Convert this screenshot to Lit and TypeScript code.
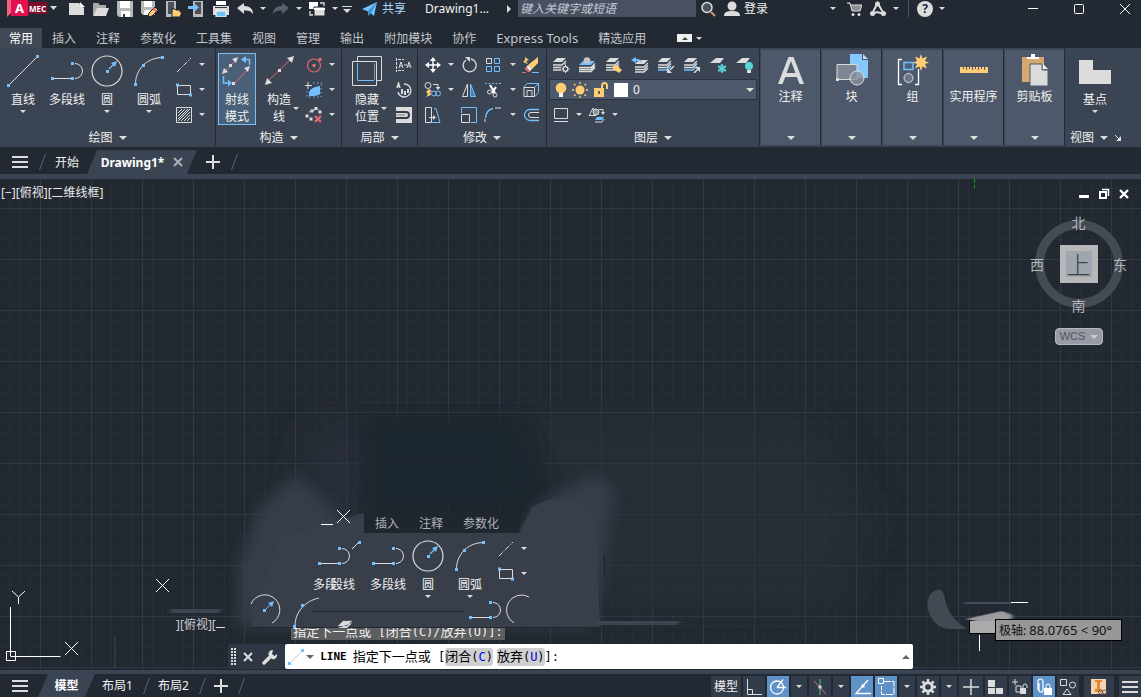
import { LitElement, html, svg, css, nothing } from "lit";
import { customElement, state } from "lit/decorators.js";
import { classMap } from "lit/directives/class-map.js";

const W = "#dcdcdc";
const B = "#74c0fb";
const Y = "#ffce74";
const R = "#e4696b";
const C = "#58d6da";

const dot = (x: number, y: number, c = B) =>
  svg`<rect x=${x - 1.5} y=${y - 1.5} width="3" height="3" fill=${c} stroke="none"/>`;

const layers = (c1 = W, c2 = W, c3 = W) => svg`
  <path d="M5 1h9l-4 4H1z" fill=${c1} stroke="none"/>
  <path d="M1 8h9l4-4" fill="none" stroke=${c2} stroke-width="1.300"/>
  <path d="M1 10.500h9l4-4" fill="none" stroke=${c2} stroke-width="1.300"/>
  <path d="M1 13h9l4-4" fill="none" stroke=${c3} stroke-width="1.500"/>`;

/* name: [width, height, drawing] */
const ICONS: Record<string, [number, number, unknown]> = {
  logo: [50, 17, svg`<path d="M0 0h4v13l-4 4z" fill="#f0647f"/><path d="M4 0h17v16H4z" fill="#e51050"/><path d="M21 2h19v12H21z" fill="#7d0b2c"/>
    <path d="M43 6h7l-3.500 4z" fill=${W}/>`],
  newdoc: [18, 16, svg`<path d="M1 2h10l5 5v7H1z" fill=${W}/><path d="M12 1v5h5z" fill="#f3f3f3"/>`],
  open: [18, 16, svg`<path d="M1 15V2h5l2 2h6v3H6z" fill="#a9a9a9"/><path d="M5 7h12l-3 8H1z" fill=${W}/>`],
  save: [18, 16, svg`<path d="M1 0h16v16H3l-2-2z" fill="#b9b9b9"/><path d="M4 0h10v7H4z" fill="#fff"/><path d="M5 10h9v6H5z" fill="#fff"/><path d="M7 13h2v3H7z" fill="#333b48"/>`],
  saveas: [18, 16, svg`<path d="M1 0h14v14H3l-2-2z" fill="#b9b9b9"/><path d="M4 0h8v6H4z" fill="#fff"/><path d="M4 9h6v5H4z" fill="#fff"/><path d="M8 16l1-4 6-6 3 3-6 6z" fill=${Y} stroke="#222933"/><path d="M13.500 7.500l3 3" stroke=${R} stroke-width="2"/>`],
  openMobile: [18, 16, svg`<path d="M2 0h10v16H2z" fill="#b9b9b9"/><path d="M4 1h6v12H4z" fill="#4a4f58"/><path d="M8 15V8h3l1 1h4v2h2l-2 5H8z" fill=${Y} stroke="#222933"/>`],
  saveMobile: [18, 16, svg`<path d="M5 0h10v16H5z" fill="#b9b9b9"/><path d="M7 1h6v12H7z" fill="#4a4f58"/><path d="M0 5h6V2l5 4.500L6 11V8H0z" fill=${B}/>`],
  print: [18, 16, svg`<path d="M4 0h10v4H4z" fill="#fff"/><path d="M1 5h16v9H1z" fill=${W}/><path d="M3 6.500h12" stroke="#333b48"/><path d="M4 10h10v6H4z" fill=${B} stroke="#fff"/>`],
  undo: [18, 16, svg`<path d="M1 7l7-5v3c6 0 9 3 9 8-2-3-5-4-9-3.500V13z" fill=${W}/>`],
  redo: [18, 16, svg`<path d="M17 7l-7-5v3c-6 0-9 3-9 8 2-3 5-4 9-3.500V13z" fill="#59606c"/>`],
  windows: [18, 16, svg`<path d="M1 1h9v7H1z" fill="#fff"/><path d="M6 6h11v9H6z" fill=${W} stroke="#222933"/><path d="M6 8h11" stroke="#fff" stroke-width="2"/><path d="M12 2h4v3M2 10v4h3" fill="none" stroke=${W} stroke-width="1.300"/>`],
  custom: [12, 16, svg`<path d="M1 5.500h10" stroke=${W}/><path d="M2 8h8l-4 4z" fill=${W}/>`],
  plane: [18, 16, svg`<path d="M1 8L16 1 13 15 8 11z" fill=${B}/><path d="M16 1L7 10v5l3-3" fill="#3b93d8"/>`],
  magnify: [16, 16, svg`<circle cx="7" cy="6.500" r="5" fill="#4a5260" stroke=${W} stroke-width="1.500"/><path d="M11 11l4 4" stroke="#c99a63" stroke-width="2"/>`],
  user: [18, 16, svg`<circle cx="9" cy="5" r="4.500" fill=${W}/><path d="M1 15c0-4 3-5 8-5s8 1 8 5z" fill=${W}/>`],
  cart: [16, 16, svg`<path d="M1 2h3l2 8h8l2-6H5" fill="#8e8e8e" stroke=${W}/><circle cx="7" cy="13.500" r="1.500" fill=${W}/><circle cx="13" cy="13.500" r="1.500" fill=${W}/>`],
  autodesk: [18, 16, svg`<path d="M3 13L8.500 2 15 13M3 13l5-2 7 2" fill="none" stroke=${W} stroke-width="2"/><circle cx="8.500" cy="3" r="2.500" fill=${W}/><circle cx="3.500" cy="12.500" r="2.500" fill=${W}/><circle cx="14.500" cy="12.500" r="2.500" fill=${W}/>`],
  winmin: [12, 12, svg`<path d="M1 5.500h10" stroke="#fff"/>`],
  winmax: [12, 12, svg`<rect x="1.500" y="1.500" width="9" height="9" rx="1" fill="none" stroke="#fff"/>`],
  winclose: [12, 12, svg`<path d="M1 1l10 10M11 1L1 11" stroke="#fff"/>`],
  menu: [16, 14, svg`<path d="M0 2h16M0 7h16M0 12h16" stroke=${W} stroke-width="2"/>`],
  plus: [14, 14, svg`<path d="M0 7h14M7 0v14" stroke=${W} stroke-width="2"/>`],
  cross: [10, 10, svg`<path d="M1 1l8 8M9 1L1 9" stroke="#aab0ba" stroke-width="2"/>`],

  line: [32, 32, svg`<path d="M2 30L30 2" stroke=${W}/>${dot(1.5, 30.5)}${dot(30.5, 1.5)}`],
  polyline: [32, 32, svg`<path d="M3 23.500h17M24 8.500a7.500 7.500 0 0 1 0 15" fill="none" stroke=${W}/>${dot(1.5, 23.5)}${dot(21.5, 8.5)}${dot(21.5, 23.5)}`],
  circle: [32, 32, svg`<circle cx="16" cy="16" r="15" fill="none" stroke=${W} stroke-width="1.200"/><path d="M18 14l5-5" stroke=${B} stroke-width="1.300"/><path d="M26 6l-6 2 4 4z" fill=${B}/>${dot(16.5, 16.5)}`],
  arc: [32, 32, svg`<path d="M2.500 29C2.500 15 13 3 29 2.500" fill="none" stroke=${W}/>${dot(2.5, 29.5)}${dot(10.5, 10.5)}${dot(29.5, 2.5)}`],
  ray: [32, 32, svg`<path d="M3 18L15 5M14 28L27 14" stroke=${R}/><path d="M17 2l-2 6-4-4zM1 19l2-6 4 4zM29 11l-2 6-4-4z" fill=${W}/>
    <path d="M28.500 10V4.500H23M2.500 21v7H8" fill="none" stroke=${B} stroke-width="1.500"/><path d="M25 1v7l-5-3.500zM7 24.500v7l4-3.500z" fill=${B}/>${dot(9.5, 10.5, W)}${dot(12.5, 28.5, W)}`],
  xline: [32, 32, svg`<path d="M5 26L27 5" stroke=${R}/><path d="M31 1l-2 7-5-5zM2 30l2-7 5 5z" fill=${W}/>${dot(16.5, 15.5, W)}`],
  hideshow: [32, 32, svg`<path d="M6.500 1.500h24v24h-24z" fill="none" stroke=${W}/><path d="M1.500 6.500h24v24h-24z" fill="#3b4453" stroke=${W}/><path d="M6.500 8v17.500H23" fill="none" stroke=${B}/><path d="M23.500 8v17" stroke="#8b929e"/>`],
  dashline: [16, 16, svg`<path d="M1 15L15 1" stroke=${W} stroke-dasharray="5 1.500 1 1.500"/>`],
  rect: [16, 16, svg`<path d="M1.500 3.500h13v9h-13z" fill="none" stroke=${W}/>${dot(1.5, 3)}${dot(14.5, 13)}`],
  hatch: [16, 16, svg`<path d="M.500.500h15v15H.500z" fill="none" stroke=${W}/><path d="M2 6l4-4M2 9l7-7M2 12l10-10M2 14L14 2M5 14l9-9M8 14l6-6M11 14l3-3" stroke=${W}/>`],
  redcircle: [16, 16, svg`<circle cx="8" cy="8.500" r="6.500" fill="none" stroke=${R} stroke-width="1.200"/>${dot(8, 8.5, R)}${dot(14, 2.5, R)}`],
  bluepick: [18, 16, svg`<path d="M4 14c-1-6 3-9 11-10v8c-2 2-7 2-11 2z" fill=${B}/><path d="M3 0v7M0 3.500h7" stroke=${W}/><path d="M8 1h9M16 2v13M2 9v6h14" fill="none" stroke=${B} stroke-dasharray="1.500 2.500"/>`],
  delcons: [18, 16, svg`<path d="M2 10C3 4 7 2 14 3" fill="none" stroke=${W} stroke-dasharray="2 3"/>${dot(2, 9, W)}${dot(7, 4, W)}${dot(11, 1.500, W)}${dot(15, 5, W)}${dot(6, 12, W)}<path d="M10 9l6 6M16 9l-6 6" stroke=${R} stroke-width="2.200"/>`],
  autodim: [18, 16, svg`<path d="M1.500 1v14M3 2.500h6M3 13.500h6" fill="none" stroke=${W} stroke-dasharray="3 1"/><path d="M4 11l2-6 2 6M5 9h2M12 11l2-6 2 6M13 9h2M9 8h3" fill="none" stroke=${W}/>`],
  rotview: [18, 16, svg`<path d="M9 2a6.500 6.500 0 1 1-6 8M2 6l1.500-5L5 6M2.500 4.500h2" fill="none" stroke=${W} stroke-width="1.400"/><path d="M6 7h2v5H6zM9 9h2v4H9zM12 7h2v4h-2z" fill=${W}/>`],
  offsetblk: [18, 16, svg`<path d="M1 0h16v16H1z" fill=${W}/><path d="M1 5h10q3 0 3 3t-3 3H1" fill="none" stroke="#333b48" stroke-width="2"/><path d="M1 8h9" stroke="#777"/>`],
  move: [16, 16, svg`<path d="M8 2v12M2 8h12" stroke="#fff" stroke-width="1.400"/><path d="M8 0l3 4H5zM8 16l3-4H5zM0 8l4-3v6zM16 8l-4-3v6z" fill="#fff"/>`],
  rotate: [16, 16, svg`<path d="M10 2a6.500 6.500 0 1 1-5 1" fill="none" stroke=${W} stroke-width="1.300"/><path d="M4 0h5v5z" fill=${W}/>`],
  array: [16, 16, svg`<path d="M1.500 1.500h5v5h-5z" fill="none" stroke=${W}/><path d="M9.500 1.500h5v5h-5zM1.500 9.500h5v5h-5zM9.500 9.500h5v5h-5z" fill="none" stroke=${B}/>`],
  eraser: [18, 16, svg`<path d="M3 0l4 3-3 1 2 3-5-2 2-2z" fill=${Y}/><path d="M16 0v6l-6 6-4-4z" fill=${Y}/><path d="M6 8l4 4-3 3-4-3z" fill="#f3f3f3"/><path d="M5 10l3 4-2 1-3-3z" fill=${R}/><path d="M0 15.500h4" stroke=${R}/><path d="M10 15.500h7" stroke=${B}/>`],
  copy: [18, 16, svg`<circle cx="4" cy="3.500" r="3" fill="none" stroke=${W}/><path d="M9 2.500h5V6" fill="none" stroke=${W}/><path d="M11.500 5h5L14 8z" fill=${W}/><path d="M5 7l3 2-2 1 1 3-5 2 2-3-2-2z" fill=${Y}/><circle cx="10" cy="11.500" r="2.500" fill="none" stroke=${B}/><circle cx="14" cy="11.500" r="2.500" fill="none" stroke=${B}/>`],
  mirror: [16, 16, svg`<path d="M6.500 2v12.500h-5z" fill="none" stroke=${W}/><path d="M9.500 2v12.500h5z" fill="#3d7fb4" stroke=${B}/>`],
  trim: [18, 16, svg`<path d="M1 1.500h16" stroke=${B} stroke-dasharray="2 1.500"/><path d="M6 3l5 8M12 5l-4 6" stroke="#fff" stroke-width="2.200"/><circle cx="5.500" cy="10" r="2" fill="none" stroke=${W}/><circle cx="11" cy="13" r="2" fill="none" stroke=${W}/>`],
  box3d: [18, 16, svg`<path d="M1.500 5.500L5 1.500h11.500v9L13 14.500M12.500 5.500l4-4" fill="none" stroke=${B}/><path d="M2 5.500h10.500v9H2zM5 8.500h5v6H5z" fill="none" stroke=${W}/>`],
  stretch: [18, 16, svg`<path d="M1.500.500h6v15h-6z" fill="none" stroke=${W}/><path d="M10 1.500h2l4 14H7" fill="none" stroke=${B}/><path d="M5 10.500h5" stroke=${W}/><path d="M9 8l3 2.500L9 13z" fill=${W}/>`],
  scale: [16, 16, svg`<path d="M.500 6V.500h15v15H10" fill="none" stroke=${B}/><path d="M.500 7.500h8v8h-8z" fill="none" stroke=${W}/>`],
  fillet: [18, 16, svg`<path d="M1 15V12" stroke=${W}/><path d="M1.500 11Q2 3 9 1.500" fill="none" stroke=${B} stroke-width="1.400"/><path d="M11 1h6" stroke=${W}/>`],
  offset: [18, 16, svg`<path d="M17 2.500H8a5.500 5.500 0 0 0 0 11h9" fill="none" stroke=${B} stroke-width="1.300"/><path d="M17 5.500H9a2.500 2.500 0 0 0 0 5h8" fill="none" stroke=${W}/>`],
  layProp: [18, 16, svg`${layers()}<circle cx="13.500" cy="12" r="4.500" fill="#3b4453"/><circle cx="13.500" cy="12" r="2.300" fill="none" stroke=${W} stroke-width="1.300"/><path d="M13.500 8v1.500M13.500 14.500V16M9.500 12H11M16 12h1.500M11 9.500l1 1M16 9.500l-1 1M11 14.500l1-1M16 14.500l-1-1" stroke=${W}/>`],
  layOff: [18, 16, svg`<path d="M5 4h12l-4 4H1z" fill=${B}/><path d="M1 10.500h12l4-4M1 12.500h12l4-4M1 14.500h12l4-4" fill="none" stroke=${W} stroke-width="1.300"/><circle cx="9" cy="3.500" r="3.300" fill="#c2c2c2"/>`],
  layIso: [18, 16, svg`${layers()}<path d="M8 9l3-1 6 5-3 3-6-4z" fill=${Y}/>`],
  layPrev: [18, 16, svg`<g transform="translate(3 2)">${layers()}</g><path d="M0 3l5-3v2c4 0 6 1 6 4-2-2-4-2-6-2v2z" fill=${B}/>`],
  layMake: [18, 16, svg`${layers(W, W, B)}<path d="M17 9l-4 4" stroke=${W} stroke-width="1.500"/><path d="M10 11v5h5z" fill=${W}/>`],
  layMatch: [18, 16, svg`${layers(W, W, B)}<path d="M11 16l4-4" stroke=${W} stroke-width="1.500"/><path d="M12 10h5v5z" fill=${W}/>`],
  layFreeze: [18, 16, svg`<path d="M6 1h8l-4 5H0z" fill=${W}/><path d="M12 7v9M8 9l8 5M16 9l-8 5" stroke=${C} stroke-width="1.500"/><circle cx="12" cy="11.500" r="3" fill="none" stroke=${C}/>`],
  layBulb: [18, 16, svg`<path d="M6 1h8l-4 5H0z" fill=${W}/><circle cx="13" cy="9" r="4" fill=${C}/><path d="M11 13h4v3h-4z" fill=${W}/>`],
  bulb: [12, 16, svg`<circle cx="6" cy="6" r="5.300" fill=${Y}/><path d="M4 11h4v4H4z" fill="#f3f3f3"/>`],
  sun: [16, 16, svg`<circle cx="8" cy="8" r="4.500" fill=${Y}/><path d="M8 0v2M8 14v2M0 8h2M14 8h2M2 2l1.500 1.500M12.500 12.500L14 14M14 2l-1.500 1.500M3.500 12.500L2 14" stroke=${Y} stroke-width="1.300"/>`],
  lock: [16, 16, svg`<path d="M1 6h10v9H1z" fill=${Y}/><path d="M9 7V4q0-3 2.500-3T14 4v3" fill="none" stroke=${Y} stroke-width="2"/><path d="M6 9v3" stroke="#333b48" stroke-width="1.500"/>`],
  swatch: [14, 14, svg`<path d="M0 0h14v14H0z" fill="#fff"/>`],
  layState: [16, 16, svg`<path d="M1.500 1.500h13v10h-13zM1 14.500h14" fill="none" stroke=${W}/>`],
  layConv: [18, 16, svg`<path d="M1 9l4-8 3 5" fill="none" stroke=${W}/><circle cx="8" cy="5" r="3" fill="#8b929e" stroke=${W}/><path d="M1 8.500h7" stroke=${W}/><path d="M11 2.500h4V5" fill="none" stroke=${W}/><path d="M13 5h4l-2 3z" fill=${W}/><path d="M9 10h7l-2 3H7z" fill=${B}/><path d="M7 15h7l2-3" fill="none" stroke=${W}/>`],

  letterA: [32, 32, svg`<path d="M3 30L13.500 3h5L29 30h-4.500l-2.700-7H10.200L7.500 30zM11.500 19h9L16 7z" fill=${W}/>`],
  block: [32, 32, svg`<path d="M14 0h12v6h6v18H14z" fill="#85c8fb"/><path d="M27 0l5 5h-5z" fill="#b7dffc"/><path d="M1 10.500h20v15H1z" fill="#7d8694" stroke=${W}/><circle cx="21" cy="24" r="7" fill="#8a929e" fill-opacity=".8" stroke=${W}/>${dot(1.5, 25.5, W)}`],
  group: [32, 32, svg`<path d="M5 5.500H1.500v25H5M18 30.500h3.500V15" fill="none" stroke="#fff" stroke-width="1.300"/><path d="M7 8.500h9v7H7z" fill="#4a6480" stroke=${B} stroke-width="1.500"/><circle cx="11.500" cy="24" r="4.500" fill="#6b7685" stroke=${W}/><path d="M24 0l1.500 4.500L30 2.500l-2 4.500 4 1.500-4 1.500 2 4.500-4.500-2L24 17l-1.500-4.500-4.500 2 2-4.500-4-1.500 4-1.500-2-4.500 4.500 2z" fill=${Y}/>`],
  ruler: [32, 32, svg`<path d="M2 13h28v6H2z" fill=${Y}/><path d="M5.500 13v2M8.500 13v3M11.500 13v2M14.500 13v3M17.500 13v2M20.500 13v3M23.500 13v2M26.500 13v3" stroke="#4d596b"/>`],
  clipboard: [32, 32, svg`<path d="M3 3h22v25H3z" fill="#d6a871"/><path d="M8 5V3h4V0h4v3h4v2z" fill="#fff"/><path d="M11 10h12v6h6v16H11z" fill="#dcdcdc" stroke="#4d596b"/><path d="M24 10l5 5h-5z" fill="#f3f3f3"/>`],
  base: [32, 32, svg`<path d="M0 5h14v10h18v14H0z" fill=${W}/>`],

  grip: [6, 18, svg`<path d="M1 0v18M4 0v18" stroke=${W} stroke-width="2" stroke-dasharray="2 1"/>`],
  cmdclose: [10, 10, svg`<path d="M1 1l8 8M9 1L1 9" stroke=${W} stroke-width="2"/>`],
  wrench: [16, 16, svg`<path d="M2 14L9 7" stroke=${W} stroke-width="3.500" stroke-linecap="round"/><path d="M11 1a4 4 0 0 0-4 6l3 3a4 4 0 0 0 5-5l-2.500 2-2.500-2z" fill=${W}/>`],
  cmdline: [16, 16, svg`<path d="M2 14L14 2" stroke="#c9c9c9"/>${dot(1.5, 14.5)}${dot(14.5, 1.5)}`],

  ortho: [16, 16, svg`<path d="M1.500 0v15.500H16M1.500 10.500h5v5" fill="none" stroke=${W}/>`],
  polar: [18, 18, svg`<circle cx="8" cy="9.500" r="6.500" fill="none" stroke="#fff" stroke-width="1.300"/><path d="M8 9.500h9M8 9.500l6-8" stroke="#fff" stroke-width="1.300"/>`],
  iso: [16, 16, svg`<path d="M2 2l12 13" stroke=${R}/><path d="M8 0v16" stroke="#4fbf78"/>${dot(8, 8, W)}`],
  track: [18, 18, svg`<path d="M15 2L3 15.500h15" fill="none" stroke="#fff" stroke-width="1.300"/>${dot(10, 8, "#fff")}`],
  snap: [18, 18, svg`<path d="M7 3.500h10v13H4.500V8" fill="none" stroke="#fff" stroke-dasharray="7 1"/><path d="M1.500.500h5v5h-5z" fill="#5f92c6" stroke="#fff"/>`],
  gear: [16, 16, svg`<circle cx="8" cy="8" r="4.300" fill="none" stroke=${W} stroke-width="3"/><path d="M8 0v3M8 13v3M0 8h3M13 8h3M2.300 2.300l2 2M11.700 11.700l2 2M13.700 2.300l-2 2M4.300 11.700l-2 2" stroke=${W} stroke-width="2.500"/>`],
  bigplus: [16, 16, svg`<path d="M0 8h16M8 0v16" stroke=${W} stroke-width="1.500"/>`],
  tiles: [16, 16, svg`<path d="M0 1h7v7H0zM0 9h7v6H0zM8 9h7v6H8z" fill=${W}/>`],
  units: [16, 16, svg`<path d="M0 3h6M3 0v6" stroke=${W}/><path d="M4 7h5v6H4z" fill="none" stroke=${W}/><path d="M8 9h6v6H8z" fill=${W}/><path d="M11 9V7q0-2 2-2t2 2v2" fill="none" stroke=${W}/>`],
  attach: [18, 18, svg`<path d="M3 12V4q0-3 2.500-3T8 4v8q0 2-2 2t-2-2V5" fill="none" stroke="#fff" stroke-width="1.200"/><path d="M9 10h8v7H9z" fill="#fff"/><path d="M11 10V8q0-2 2-2t2 2v2" fill="none" stroke="#fff"/>`],
  shapes: [16, 16, svg`<path d="M.500.500h6v6h-6z" fill="none" stroke=${W}/><circle cx="12.500" cy="6" r="3" fill="none" stroke=${W}/><path d="M7 10l4 5.500H3z" fill="none" stroke=${W}/>`],
  graphics: [16, 16, svg`<path d="M0 0h15v15H0z" fill="#f6d3ae"/><path d="M4 1h7v2H9v7h2v3H4v-3h2V3H4z" fill="#e48a35"/><circle cx="9.500" cy="13" r="2" fill="none" stroke="#70604c"/><circle cx="13.500" cy="13" r="2" fill="none" stroke="#70604c"/>`],
  vmin: [12, 12, svg`<path d="M1 7h10v3H1z" fill="#fff"/>`],
  vrestore: [12, 12, svg`<path d="M4 1.500h6.500V8" fill="none" stroke="#fff" stroke-width="1.500"/><path d="M2 4h6v6H2z" fill="none" stroke="#fff" stroke-width="2"/>`],
  vclose: [12, 12, svg`<path d="M2 2l8 8M10 2l-8 8" stroke="#fff" stroke-width="2.400"/>`],
  launcher: [8, 8, svg`<path d="M1 1l5 5" stroke=${W}/><path d="M7 2v5H2z" fill=${W}/>`],
};

const icon = (name: string) => {
  const [w, h, body] = ICONS[name];
  return html`<svg class="icon" width=${w} height=${h} viewBox="0 0 ${w} ${h}" aria-hidden="true">${body}</svg>`;
};

const caret = (size = "sm") => html`<i class="caret ${size}"></i>`;

const tool = (name: string, label: string) =>
  html`<button class="tool" aria-label=${label}>${icon(name)}</button>`;
const drop = (label: string) =>
  html`<button class="drop" aria-label="${label}选项">${caret()}</button>`;

@customElement("app-root")
export class AppRoot extends LitElement {
  @state() private ribbonTab = "常用";
  @state() private layout = "模型";

  static styles = css`
    :host {
      display: flex;
      flex-direction: column;
      min-height: 100vh;
      overflow: hidden;
      background: #222933;
      color: #f0f0f0;
      font: 12px/17px "Noto Sans", "Noto Sans CJK SC", sans-serif;
    }
    *, *::before { box-sizing: border-box; }
    button, select, input { margin: 0; padding: 0; border: 0; background: none; color: inherit; font: inherit; }
    button { display: flex; align-items: center; justify-content: center; white-space: nowrap; }
    .icon { display: block; flex: none; }
    .caret { flex: none; border: 3px solid transparent; border-top-color: #dcdcdc; border-bottom: 0; }
    .caret.lg { border-width: 4px 4px 0; }
    .row { display: flex; align-items: center; }

    .titlebar { display: flex; align-items: center; height: 17px; margin-bottom: 11px; padding-left: 7px; }
    .brand { position: relative; justify-content: flex-start; width: 58px; height: 17px; }
    .brand span, .brand small { position: absolute; top: 0; left: 4px; width: 17px; color: #fff; font-weight: 700; font-size: 13px; text-align: center; }
    .brand small { left: 21px; width: 19px; font-size: 8px; }
    .titlebar .tool { width: 24px; height: 16px; }
    .titlebar .drop { width: 12px; }
    .share { gap: 3px; margin-left: 8px; color: #a9d7fb; }
    .doc { margin-left: 19px; }
    .fwd { margin: 0 7px 0 18px; border: 4px solid transparent; border-left-color: #dcdcdc; border-right: 0; }
    .search { width: 178px; height: 17px; padding: 0 2px; background: #485062; font-style: italic; }
    .search::placeholder { color: #c9ccd2; opacity: 1; }
    .login { gap: 3px; margin: 0 59px 0 3px; }
    .rule { width: 1px; height: 17px; margin: 0 8px 0 6px; background: #4c5462; }
    .help { width: 16px; height: 16px; margin-right: 3px; border-radius: 50%; background: #dcdcdc; color: #222933; font-weight: 700; }
    .market { margin-left: 3px; }
    .wincontrols { gap: 34px; margin-left: auto; padding-right: 10px; }

    .ribbontabs { height: 20px; }
    .ribbontabs button { height: 20px; padding: 0 10px; color: #c3c6cb; }
    .ribbontabs button.active { padding: 0 9px; background: #404855; color: #fff; }
    .ribbontabs button.latin { font-size: 13px; }
    .ribbontabs .collapse { padding: 0; margin: 0 4px 0 21px; width: 15px; height: 8px; background: #f0f0f0; }
    .collapse i { border: 3px solid transparent; border-bottom-color: #444; border-top: 0; }

    .ribbon { display: flex; min-height: 99px; padding: 1px 0; background: #3b4453; }
    .panel { display: flex; flex: none; flex-direction: column; justify-content: space-between; border-right: 1px solid #232a35; }
    .panel.draw { width: 216px; }
    .panel.cons { width: 126px; }
    .panel.local { width: 76px; }
    .panel.edit { width: 129px; }
    .panel.layer { width: 213px; }
    .panel.view { flex: 1; border: 0; }
    .body { display: flex; align-items: flex-start; }
    .panel footer { display: flex; align-items: center; justify-content: center; gap: 6px; height: 17px; }
    .big { flex-direction: column; justify-content: flex-start; margin-top: 4px; padding-top: 1px; border: 1px solid transparent; }
    .big .icon { margin-bottom: 4px; }
    .big > .caret { margin-top: 2px; }
    .big.on { height: 72px; border-color: #74c0fb; background: #4a6078; }
    .side { display: flex; align-items: center; padding-left: 8px; }
    .side .caret { margin-left: 2px; }
    .w38 { width: 38px; }
    .w42 { width: 42px; }
    .w46 { width: 46px; }
    .w50 { width: 50px; }
    .stack { display: grid; grid-auto-rows: 25px; align-items: center; padding-top: 3px; }
    .ribbon .tool { width: 24px; height: 24px; }
    .ribbon .drop { width: 12px; height: 24px; }
    .pair { grid-template-columns: 24px 12px; }
    .modify { grid-template-columns: 24px 12px 24px 26px 12px 28px; padding-left: 3px; }
    .construct { padding-left: 2px; gap: 2px; }
    .layerrows { display: grid; grid-auto-rows: 25px; align-items: center; padding: 3px 2px 0; }
    .layerrows .row { justify-content: space-between; }
    .layerrows .row.start { justify-content: flex-start; }
    .combo { display: flex; align-items: center; gap: 5px; height: 21px; padding: 0 2px 0 5px; border: 1px solid #2a3240; background: #4d596b; }
    .combo select { flex: 1; appearance: none; }
    .closedwrap { display: flex; flex: none; padding: 1px 0 1px 1px; border-right: 1px solid #232a35; }
    .closed { flex-direction: column; width: 59px; padding: 4px 0 5px; background: #4d596b; }
    .closed span { margin-top: 2px; }
    .closed .caret { margin-top: auto; }
    .view footer { justify-content: flex-start; padding-left: 5px; }
    .view .big { width: 60px; }

    .slash { flex: none; width: 1px; height: 16px; background: #5a6270; transform: skewX(-20deg); }
    .filetabs { display: flex; align-items: center; height: 27px; padding: 3px 0 0 12px; }
    .filetabs > button { height: 24px; }
    .filetabs .slash { margin: 0 12px 0 14px; }
    .sheet { clip-path: polygon(10px 0, 100% 0, calc(100% - 10px) 100%, 0 100%); background: #3b4453; }
    .doctab { gap: 9px; width: 110px; margin-left: 8px; font-weight: 700; color: #fff; }
    .addtab { margin-left: 9px; }
    .strip { height: 5px; flex: none; background: #3b4453; }

    .canvas { position: relative; flex: 1; min-height: 300px; overflow: hidden; background: #22282f; }
    .scene { position: absolute; inset: 0; width: 100%; height: 100%; }
    .viewlabel { position: absolute; top: 5px; left: 1px; color: #e8e8e8; }
    .viewctl { position: absolute; top: 9px; right: 11px; display: flex; gap: 8px; }
    .ghostlabel { position: absolute; top: 437px; left: 176px; color: #c9ccd2; }
    .ghost { position: absolute; top: 334px; left: 304px; width: 232px; }
    .ghosttabs { display: flex; gap: 20px; margin-left: 60px; padding-left: 11px; width: 159px; height: 20px; align-items: center; color: #aeb2b8; background: #20262e; clip-path: polygon(0 0, 100% 0, calc(100% - 4px) 100%, 0 100%); }
    .ghosttools { display: flex; align-items: flex-start; }
    .ghosttools .big { margin-top: 5px; }
    .ghosttools .first { width: 60px; margin-right: 3px; }
    .ghosttools .overlap { margin-left: -6px; }
    .ghosttools .stack { grid-template-columns: 22px 14px; justify-items: center; padding-left: 2px; }

    .cube { position: absolute; top: 33px; right: 14px; display: grid; grid-template: 21px 62px 21px / 14px 69px 14px; place-items: center; color: #b4b7bb; font: 14px/17px "Noto Sans CJK SC", sans-serif; }
    .cube::before { content: ""; position: absolute; top: 8px; left: 5px; width: 88px; height: 88px; border: 9px solid #4b5159; border-radius: 50%; opacity: .85; }
    .cube > * { position: relative; grid-row: 2; }
    .cube .n { grid-area: 1 / 2; }
    .cube .s { grid-area: 3 / 2; }
    .cube .face { grid-column: 2; width: 38px; height: 38px; border: 6px solid #b5b7b9; background: #9fa7ae; color: #3a4047; font: 300 24px/26px "Noto Sans CJK SC", sans-serif; }
    .wcs { position: absolute; top: 149px; right: 38px; gap: 5px; width: 48px; height: 17px; border: 1px solid #b5b9c0; border-radius: 4px; background: #979ba5; color: #50565f; font: 11px/15px "Liberation Sans", sans-serif; }
    .wcs .caret { border-top-color: #c6cad1; }
    .tip { position: absolute; top: 440px; left: 995px; height: 22px; padding: 0 9px 0 3px; border: 1px solid #000; background: #979797; color: #111; line-height: 20px; white-space: nowrap; }
    .tip span { font-size: 13px; }

    .command { position: absolute; bottom: 1px; left: 20%; width: 60%; font: 12px/16px "DejaVu Sans Mono", "Noto Sans CJK SC", monospace; }
    .prompt { display: flex; align-items: flex-end; width: max-content; height: 12px; margin: 0 0 4px 63px; padding: 0 2px; overflow: hidden; background: #5c5e60; color: #f2f2f2; white-space: pre; }
    .cjk { font-size: 13px; }
    .cmdbar { display: flex; align-items: center; height: 25px; background: #2f3644; }
    .cmdbar > button { width: 22px; height: 25px; }
    .handle { margin: 0 0 0 3px; }
    .cmdfield { display: flex; flex: 1; align-items: center; height: 25px; margin-left: 4px; padding: 0 3px; border-radius: 2px; background: #fff; color: #000; white-space: pre; }
    .cmdfield .caret { margin: 0 6px 0 2px; border-top-color: #666; }
    .cmdfield b { font-size: 11px; margin-right: 6px; }
    .cmdfield .opt { display: flex; align-items: center; height: 18px; border-radius: 3px; background: #d0d0d0; }
    .opts { display: flex; gap: 4px; }
    .cmdfield em { color: #0000e6; font-style: normal; }
    .cmdfield input { flex: 1; min-width: 0; outline: 0; }
    .up { border: 4px solid transparent; border-bottom-color: #666; border-top: 0; }

    .status { display: flex; align-items: stretch; height: 23px; padding-left: 12px; }
    .strip.low { height: 4px; }
    .sheettab { width: 57px; margin-left: 10px; color: #fff; font-weight: 700; }
    .status .lay { padding: 0 7px; }
    .status .slash { align-self: center; margin: 0 4px 0 6px; }
    .sts { display: flex; gap: 2px; margin-left: auto; padding-top: 2px; }
    .sts button { width: 22px; background: #333c4a; }
    .sts .drop { width: 16px; }
    .sts .mid { width: 24px; }
    .sts .wide { width: 30px; }
    .sts .on { background: #5f92c6; }
    .sts .far { margin-left: 3px; }
  `;

  private big(name: string, label: string, width: string, arrow = true) {
    return html`<button class="big ${width}">${icon(name)}<span>${label}</span>${arrow ? caret() : nothing}</button>`;
  }

  private foot(label: string) {
    return html`<footer><span>${label}</span>${caret("lg")}</footer>`;
  }

  private titlebar() {
    return html`<header class="titlebar">
      <button class="brand" aria-label="应用程序菜单">${icon("logo")}<span>A</span><small>MEC</small></button>
      ${["newdoc:新建", "open:打开", "save:保存", "saveas:另存为", "openMobile:从移动设备打开", "saveMobile:保存到移动设备", "print:打印", "undo:放弃"].map((s) => tool(s.split(":")[0], s.split(":")[1]))}
      ${drop("放弃")}${tool("redo", "重做")}${drop("重做")}${tool("windows", "切换窗口")}${drop("窗口")}
      <button aria-label="自定义">${icon("custom")}</button>
      <button class="share">${icon("plane")}共享</button>
      <span class="doc">Drawing1...</span><i class="fwd"></i>
      <input class="search" aria-label="搜索" placeholder="键入关键字或短语" />
      ${tool("magnify", "查找")}
      <button class="login">${icon("user")}登录</button>
      ${drop("登录")}
      <div class="row market">${tool("cart", "商店")}${tool("autodesk", "Autodesk")}${drop("Autodesk")}</div>
      <i class="rule"></i><button class="help" aria-label="帮助">?</button>${drop("帮助")}
      <div class="row wincontrols">
        <button aria-label="最小化">${icon("winmin")}</button>
        <button aria-label="最大化">${icon("winmax")}</button>
        <button aria-label="关闭">${icon("winclose")}</button>
      </div>
    </header>`;
  }

  private tabs() {
    const names = ["常用", "插入", "注释", "参数化", "工具集", "视图", "管理", "输出", "附加模块", "协作", "Express Tools", "精选应用"];
    return html`<nav class="row ribbontabs">
      ${names.map((n) => html`<button class=${classMap({ active: n === this.ribbonTab, latin: /^[A-Z]/.test(n) })} @click=${() => (this.ribbonTab = n)}>${n}</button>`)}
      <button class="collapse" aria-label="折叠功能区"><i></i></button>${caret()}
    </nav>`;
  }

  private ribbon() {
    const closed = [["letterA", "注释"], ["block", "块"], ["group", "组"], ["ruler", "实用程序"], ["clipboard", "剪贴板"]];
    return html`<section class="ribbon">
      <div class="panel draw">
        <div class="body">
          ${this.big("line", "直线", "w46")}${this.big("polyline", "多段线", "w42", false)}
          ${this.big("circle", "圆", "w38")}${this.big("arc", "圆弧", "w46")}
          <div class="stack pair">
            ${tool("dashline", "射线")}${drop("射线")}${tool("rect", "矩形")}${drop("矩形")}${tool("hatch", "图案填充")}${drop("图案填充")}
          </div>
        </div>
        ${this.foot("绘图")}
      </div>
      <div class="panel cons">
        <div class="body construct">
          <button class="big w38 on">${icon("ray")}<span>射线<br />模式</span></button>
          <button class="big w42">${icon("xline")}<span class="side"><span>构造<br />线</span>${caret()}</span></button>
          <div class="stack pair">
            ${tool("redcircle", "构造圆")}${drop("构造圆")}${tool("bluepick", "自动构造")}${drop("自动构造")}${tool("delcons", "删除构造")}${drop("删除构造")}
          </div>
        </div>
        ${this.foot("构造")}
      </div>
      <div class="panel local">
        <div class="body">
          <button class="big w50">${icon("hideshow")}<span class="side"><span>隐藏<br />位置</span>${caret()}</span></button>
          <div class="stack">${tool("autodim", "局部视图")}${tool("rotview", "旋转视图")}${tool("offsetblk", "轮廓")}</div>
        </div>
        ${this.foot("局部")}
      </div>
      <div class="panel edit">
        <div class="stack modify">
          ${tool("move", "移动")}${drop("移动")}${tool("rotate", "旋转")}${tool("array", "阵列")}${drop("阵列")}${tool("eraser", "删除")}
          ${tool("copy", "复制")}${drop("复制")}${tool("mirror", "镜像")}${tool("trim", "修剪")}${drop("修剪")}${tool("box3d", "分解")}
          ${tool("stretch", "拉伸")}<span></span>${tool("scale", "缩放")}${tool("fillet", "圆角")}${drop("圆角")}${tool("offset", "偏移")}
        </div>
        ${this.foot("修改")}
      </div>
      <div class="panel layer">
        <div class="layerrows">
          <div class="row">
            ${["layProp", "layOff", "layIso", "layPrev", "layMake", "layMatch", "layFreeze", "layBulb"].map((n, i) => tool(n, `图层工具 ${i + 1}`))}
          </div>
          <div class="combo">${icon("bulb")}${icon("sun")}${icon("lock")}${icon("swatch")}
            <select aria-label="图层"><option>0</option></select>${caret("lg")}</div>
          <div class="row start">${tool("layState", "图层状态")}${drop("图层状态")}${tool("layConv", "图层转换")}${drop("图层转换")}</div>
        </div>
        ${this.foot("图层")}
      </div>
      ${closed.map(([i, n]) => html`<div class="closedwrap"><button class="closed">${icon(i)}<span>${n}</span>${caret("lg")}</button></div>`)}
      <div class="panel view">
        <div class="body">${this.big("base", "基点", "w46")}</div>
        <footer><span>视图</span>${caret("lg")}${icon("launcher")}</footer>
      </div>
    </section>`;
  }

  private scene() {
    const at = (x: number, y: number, name: string) => svg`<g transform="translate(${x} ${y})">${ICONS[name][2]}</g>`;
    return html`<svg class="scene" aria-hidden="true">
      <defs>
        <pattern id="grid" x="40" y="29" width="51" height="51" patternUnits="userSpaceOnUse">
          <path d="M10.500 0v51M20.500 0v51M31.500 0v51M41.500 0v51M0 10.500h51M0 20.500h51M0 31.500h51M0 41.500h51" stroke="#262d38"/>
          <path d="M.500 0v51M0 .500h51" stroke="#313946"/>
        </pattern>
        <filter id="soft"><feGaussianBlur stdDeviation="7"/></filter>
        <filter id="wide"><feGaussianBlur stdDeviation="22"/></filter>
        <filter id="thin"><feGaussianBlur stdDeviation="2 0.600"/></filter>
      </defs>
      <rect width="100%" height="100%" fill="url(#grid)"/>
      <path d="M520 240h290l60 110-40 80H600z" fill="#2b323b" opacity=".55" filter="url(#wide)"/>
      <path d="M320 245l50-10v130h-90z" fill="#2b333c" opacity=".7" filter="url(#wide)"/>
      <path d="M364 236h160l26 60v40h-190z" fill="#1f252d" opacity=".9" filter="url(#soft)"/>
      <path d="M295 296l-36 34-20 55v62h350l12-40 14-100-24-10-50 26-30 45H360l-30-40z" fill="#353d48" filter="url(#soft)"/>
      <path d="M364 354h155l13-26 16-7h38l10 20 4 107H250l30-90 84-24z" fill="#383f4b"/>
      <path d="M238 406h66" stroke="#1d222c" stroke-width="2.500" filter="url(#thin)"/>
      <path d="M312 432.500h152M604.500 376v20" stroke="#1d222c"/>
      <path d="M320 440h130" stroke="#4a5360" stroke-width="14" opacity=".6" filter="url(#soft)"/>
      <path d="M598 448.500h-348" stroke="#22282f"/>
      <path d="M170 431.500h50l.1.100M598 444.500h80l.1.100" stroke="#3d4553" stroke-width="5" filter="url(#thin)"/>
      <path d="M115 458v30l.1.100" stroke="#3a4044" stroke-width="4" filter="url(#thin)"/>
      <path d="M936 411c-16 6-8 38 13 39h18c-14-9-20-18-23-34-2-6-5-6-8-5z" fill="#434952"/>
      <path d="M964 424h46v.2" fill="none" stroke="#454e5d" stroke-width="5" filter="url(#thin)"/>
      <path d="M969.500 441.500h40v13h-40z" fill="#aaa" stroke="#000"/>
      <path d="M966 440l36-8 10 4v6h-36z" fill="#9b9ba0" filter="url(#thin)"/>
      <path d="M1011 423.500h17M979.500 456v16" stroke="#fff"/>
      <path d="M974.500 0v4M974.500 6v3" stroke="#00b400"/>
      <g fill="none" stroke="#fff">
        <path d="M6.500 472.500h9v9h-9zM10.500 477V428M10.500 477.500h50M12 412l6.500 6 6.500-6M18.500 418v7M65 463l13 13M78 463l-13 13"/>
        <path d="M156 400l13 13M169 400l-13 13M337 331l13 13M350 331l-13 13M321 345.500h12"/>
      </g>
      <path d="M216 448.500h9" stroke=${W}/>
      <path d="M352 370l6-6" stroke=${W}/>${dot(359.5, 363.5)}
      <path d="M251 425a15 15 0 1 1 21 19" fill="none" stroke=${W}/>
      <path d="M266 430l5-5" stroke=${B}/><path d="M274 422l-6 2 4 4z" fill=${B}/>${dot(264.5, 431.5)}
      <path d="M295 447c0-14 10-25 24-28" fill="none" stroke=${W}/>${dot(294.5, 447.5)}${dot(302.5, 426.5)}
      <path d="M343 442h9l-5 5h-9zM338 449h9l5-5" fill=${W} stroke="#aab" stroke-width=".500"/>
      ${at(469, 415, "polyline")}
      <path d="M529 418a15 15 0 1 0-15 26" fill="none" stroke=${W}/>
    </svg>`;
  }

  private canvas() {
    return html`<main class="canvas">
      ${this.scene()}
      <div class="viewlabel">[−][俯视][二维线框]</div>
      <div class="viewctl">
        <button aria-label="最小化视口">${icon("vmin")}</button>
        <button aria-label="还原视口">${icon("vrestore")}</button>
        <button aria-label="关闭视口">${icon("vclose")}</button>
      </div>
      <div class="ghostlabel">][俯视][</div>
      <div class="ghost">
        <div class="ghosttabs"><span>插入</span><span>注释</span><span>参数化</span></div>
        <div class="ghosttools">
          <button class="big first">${icon("polyline")}<span><span>多段</span><span class="overlap">段线</span></span></button>
          ${this.big("polyline", "多段线", "w42", false)}${this.big("circle", "圆", "w38")}${this.big("arc", "圆弧", "w46")}
          <div class="stack"><button aria-label="射线">${icon("dashline")}</button>${caret()}<button aria-label="矩形">${icon("rect")}</button>${caret()}</div>
        </div>
      </div>
      <div class="cube">
        <span class="n">北</span><span>西</span><button class="face">上</button><span>东</span><span class="s">南</span>
      </div>
      <button class="wcs">WCS${caret("lg")}</button>
      <div class="tip">极轴: <span>88.0765 &lt; 90°</span></div>
      <div class="command">
        <div class="prompt"><span class="cjk">指定下一点或</span> [<span class="cjk">闭合</span>(C)/<span class="cjk">放弃</span>(U)]:</div>
        <div class="cmdbar">
          <span class="handle">${icon("grip")}</span>
          <button aria-label="关闭命令行">${icon("cmdclose")}</button>
          <button aria-label="自定义命令行">${icon("wrench")}</button>
          <label class="cmdfield">${icon("cmdline")}${caret("lg")}<b>LINE</b><span class="cjk">指定下一点或</span><span> [</span><span class="opts"><span class="opt"><span class="cjk">闭合</span>(<em>C</em>)</span><span class="opt"><span class="cjk">放弃</span>(<em>U</em>)</span></span><span>]:</span><input aria-label="命令" /><i class="up"></i></label>
        </div>
      </div>
    </main>`;
  }

  private status() {
    const b = (name: string, label: string, cls = "") => html`<button class=${cls} aria-label=${label}>${icon(name)}</button>`;
    return html`<footer class="status">
      <button aria-label="布局菜单">${icon("menu")}</button>
      <button class="sheet sheettab" @click=${() => (this.layout = "模型")}>${this.layout}</button>
      <button class="lay">布局1</button><i class="slash"></i><button class="lay">布局2</button><i class="slash"></i>
      <button class="lay" aria-label="新建布局">${icon("plus")}</button><i class="slash"></i>
      <div class="sts">
        <button class="wide">模型</button>
        ${b("ortho", "正交")}${b("polar", "极轴追踪", "on")}${drop("极轴")}${b("iso", "等轴测")}${drop("等轴测")}
        ${b("track", "对象捕捉追踪", "on")}${b("snap", "对象捕捉", "on")}${drop("捕捉")}${b("gear", "工作空间")}${drop("工作空间")}
        ${b("bigplus", "注释监视器", "mid")}${b("tiles", "快捷特性")}${b("units", "锁定界面")}${b("attach", "附着", "on")}${b("shapes", "隔离对象")}
        ${b("graphics", "图形性能", "wide far")}${b("menu", "自定义", "far")}
      </div>
    </footer>`;
  }

  render() {
    return html`
      ${this.titlebar()}${this.tabs()}${this.ribbon()}
      <nav class="filetabs">
        <button aria-label="文件菜单">${icon("menu")}</button><i class="slash"></i>
        <button>开始</button>
        <button class="sheet doctab">Drawing1*${icon("cross")}</button>
        <button class="addtab" aria-label="新建图形">${icon("plus")}</button><i class="slash"></i>
      </nav>
      <div class="strip"></div>
      ${this.canvas()}
      <div class="strip low"></div>
      ${this.status()}
    `;
  }
}
